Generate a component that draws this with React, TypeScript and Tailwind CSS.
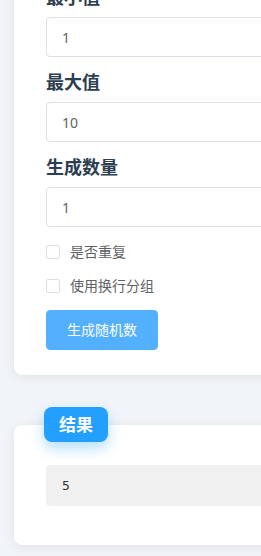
import { useState } from 'react';

const font = { fontFamily: '"Noto Sans", "Noto Sans CJK SC", sans-serif' };

const fields = [
    { label: '最小值', value: '1' },
    { label: '最大值', value: '10' },
    { label: '生成数量', value: '1' },
];

function Checkbox({ label }: { label: string }) {
    const [checked, setChecked] = useState(false);
    return (
        <label className="flex items-center h-5 cursor-pointer" onClick={() => setChecked(!checked)}>
            <span
                className={
                    checked
                        ? 'w-[14px] h-[14px] rounded-[2px] border border-[#409eff] bg-[#409eff]'
                        : 'w-[14px] h-[14px] rounded-[2px] border border-[#dcdfe6] bg-white'
                }
            />
            <span className="ml-[10px] text-[14px] leading-5 text-[#606266]">{label}</span>
        </label>
    );
}

export default function App() {
    const [values, setValues] = useState(fields.map((f) => f.value));

    return (
        <div className="w-[261px] h-[556px] overflow-hidden bg-[#f1f4f8]" style={font}>
            <div className="w-[700px] flex flex-col -mt-[36px]">
                {/* Form card */}
                <div className="ml-[14px] bg-white rounded-lg shadow-[0_2px_12px_rgba(0,0,0,0.08)] pt-5 pb-[25px] px-8">
                    {fields.map((f, i) => (
                        <div key={f.label} className={i === 0 ? '' : 'mt-3'}>
                            <div className="text-[18px] leading-[27px] font-bold text-[#2c3e50] mb-[6px]">
                                {f.label}
                            </div>
                            <input
                                value={values[i]}
                                onChange={(e) => {
                                    const next = [...values];
                                    next[i] = e.target.value;
                                    setValues(next);
                                }}
                                className="w-full h-10 px-[15px] border border-[#dcdfe6] rounded text-[14px] text-[#606266] outline-none"
                                style={font}
                            />
                        </div>
                    ))}

                    <div className="mt-[15px]">
                        <Checkbox label="是否重复" />
                    </div>
                    <div className="mt-[14px]">
                        <Checkbox label="使用换行分组" />
                    </div>

                    <button className="mt-[14px] h-10 px-5 rounded border border-[#53b0ff] bg-[#53b0ff] text-white text-[14px] leading-none">
                        生成随机数
                    </button>
                </div>

                {/* Result card */}
                <div className="relative mt-[50px] ml-[14px] bg-white rounded-lg shadow-[0_2px_12px_rgba(0,0,0,0.08)] pt-10 pb-[39px] px-8">
                    <div className="absolute -top-[18px] left-[30px] h-[35px] px-[15px] rounded-lg bg-[#23a0ff] text-white text-[17px] font-bold flex items-center shadow-[0_6px_14px_rgba(35,160,255,0.35)]">
                        结果
                    </div>
                    <div className="h-[41px] rounded bg-[#f0f0f0] px-4 flex items-center text-[13px] text-[#333]" style={{ fontFamily: '"DejaVu Sans Mono", monospace' }}>
                        5
                    </div>
                </div>
            </div>
        </div>
    );
}
